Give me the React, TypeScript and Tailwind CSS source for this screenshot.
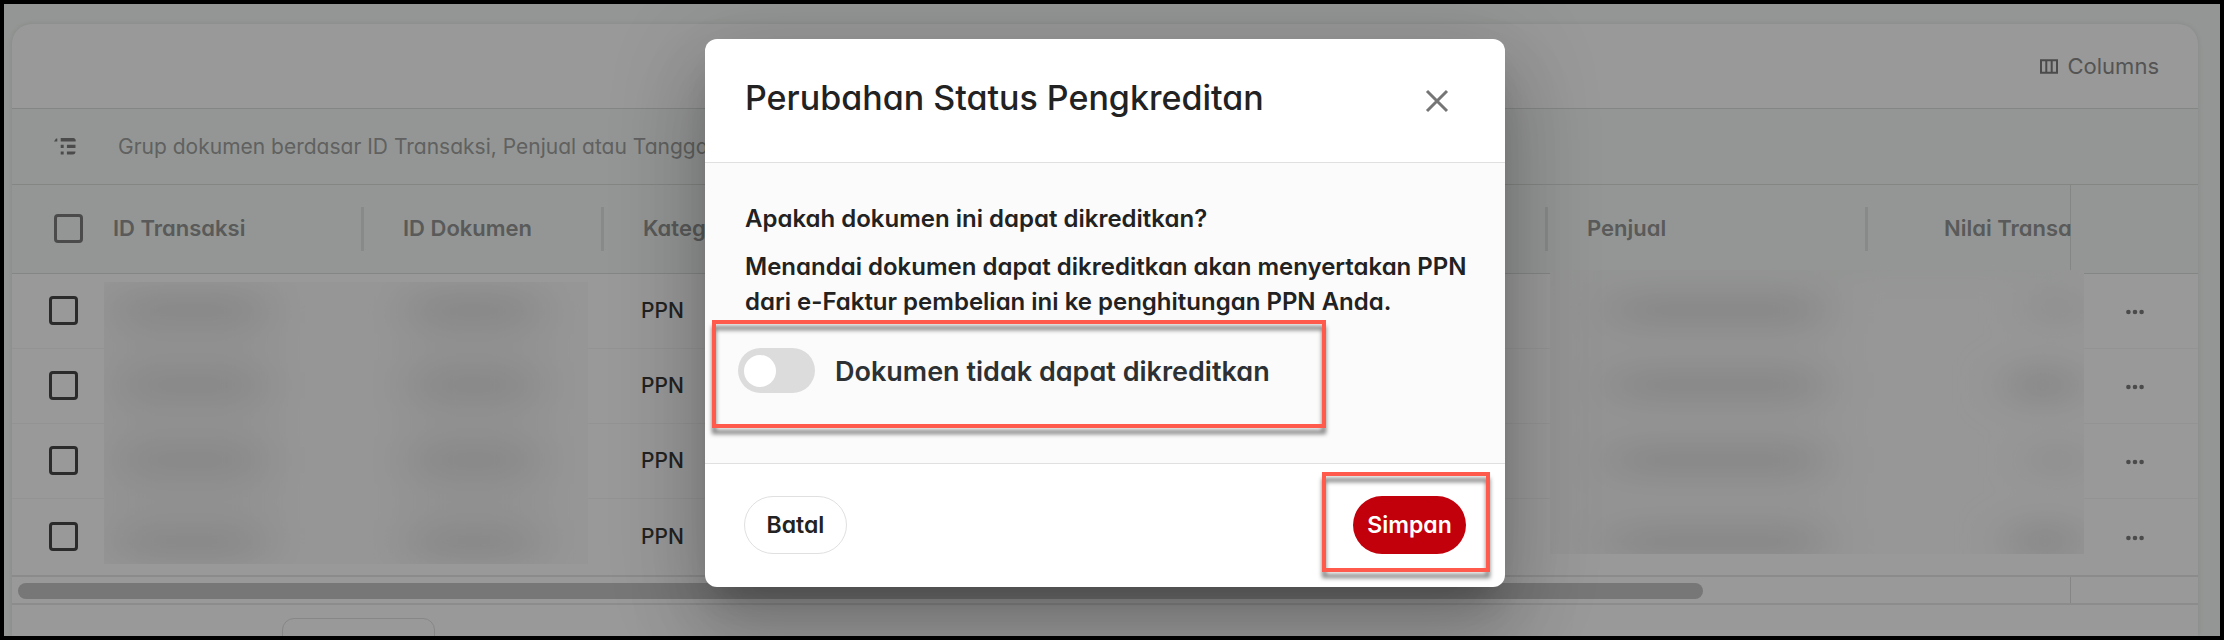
import React, { useState } from 'react';

const ROWS = [1, 2, 3, 4];

const HEAD_CELL = 'relative p-0 pl-[39px] text-left font-semibold whitespace-nowrap overflow-hidden';

function ColumnDivider() {
  return <span className="absolute right-0 top-[22px] h-[44px] w-[3px] bg-[#e3e5e4]" />;
}

function GroupIcon() {
  return (
    <svg width="22" height="17" viewBox="0 0 22 17" fill="#7d7d7d" aria-hidden="true">
      <path d="M0 3.6 2 .4h1.3v3.2H0z" />
      <path d="M6.7 0H19a2.6 2.6 0 0 1 2.6 3.4H6.7z" />
      <path d="M6.7 6.8h3V10h-3zM12.9 6.8h8.6V10h-8.6z" />
      <path d="M6.7 13.4h3v3.2h-3zM12.9 13.4h8.6a3.2 3.2 0 0 1-2.8 3.2h-5.8z" />
    </svg>
  );
}

function ColumnsIcon() {
  return (
    <svg width="18" height="15" viewBox="0 0 18 15" fill="none" stroke="#7d7d7d" strokeWidth="2" aria-hidden="true">
      <path d="M1 1.2h16v12.6H1zM6.3 1v13M11.7 1v13" />
    </svg>
  );
}

function MoreIcon() {
  return (
    <svg width="18" height="6" viewBox="0 0 18 6" fill="#7d7d7d" aria-hidden="true">
      <circle cx="2.4" cy="3" r="2.3" />
      <circle cx="9" cy="3" r="2.3" />
      <circle cx="15.6" cy="3" r="2.3" />
    </svg>
  );
}

function CheckBox({ label, dark }: { label: string; dark?: boolean }) {
  return (
    <input
      type="checkbox"
      aria-label={label}
      className={`block size-[29px] appearance-none rounded-[4px] border-3 ${
        dark ? 'border-[#484848]' : 'border-[#7d7d7d]'
      }`}
    />
  );
}

// Hidden values of the first two columns
function LeftRedaction() {
  return (
    <svg className="absolute left-[92px] top-[97px] h-[282px] w-[484px]" viewBox="0 0 484 282" aria-hidden="true">
      <defs>
        <filter id="soft-left" x="-30%" y="-60%" width="160%" height="220%">
          <feGaussianBlur stdDeviation="26 15" />
        </filter>
      </defs>
      <rect width="484" height="282" fill="#fbfbfb" />
      <g filter="url(#soft-left)" fill="#e0e0e0">
        <rect x="0" y="0" width="170" height="282" fill="#f2f2f2" />
        <rect x="300" y="0" width="140" height="282" fill="#f2f2f2" />
        {[28, 103, 178, 262].map((y) => (
          <React.Fragment key={y}>
            <rect x="20" y={y - 14} width="135" height="28" />
            <rect x="310" y={y - 14} width="120" height="28" />
          </React.Fragment>
        ))}
      </g>
    </svg>
  );
}

// Hidden values of the seller and amount columns
function RightRedaction() {
  return (
    <svg className="absolute right-[114px] top-[85px] h-[284px] w-[534px]" viewBox="0 0 534 284" aria-hidden="true">
      <defs>
        <filter id="soft-right" x="-30%" y="-60%" width="160%" height="220%">
          <feGaussianBlur stdDeviation="26 15" />
        </filter>
      </defs>
      <rect width="534" height="284" fill="#fcfcfc" />
      <g filter="url(#soft-right)" fill="#dedede">
        <rect x="10" y="-10" width="270" height="310" fill="#f5f6f5" />
        <rect x="0" y="-30" width="534" height="38" fill="#f4f7f5" />
        {[40, 115, 190, 272].map((y) => (
          <rect key={y} x="65" y={y - 14} width="205" height="28" />
        ))}
        <rect x="490" y="22" width="34" height="32" fill="#e4e4e4" />
        <rect x="464" y="96" width="58" height="38" />
        <rect x="490" y="174" width="34" height="32" fill="#e4e4e4" />
        <rect x="466" y="252" width="58" height="38" />
      </g>
    </svg>
  );
}

function DocumentTable() {
  return (
    <div className="relative">
      <table className="w-full table-fixed border-collapse text-[22px]">
        <colgroup>
          <col className="w-[72px]" />
          <col className="w-[280px]" />
          <col className="w-[240px]" />
          <col />
          <col className="w-[320px]" />
          <col className="w-[202px]" />
          <col className="w-[128px]" />
        </colgroup>
        <thead>
          <tr className="h-[88px] border-b border-[#dcdfdd] bg-[#f7fbf8] text-[#949695]">
            <th className="p-0 pl-[42px]">
              <CheckBox label="Pilih semua dokumen" />
            </th>
            <th className="relative p-0 pl-[29px] text-left font-semibold whitespace-nowrap">
              ID Transaksi
              <ColumnDivider />
            </th>
            <th className={HEAD_CELL}>
              ID Dokumen
              <ColumnDivider />
            </th>
            <th className={HEAD_CELL}>
              Kategori
              <ColumnDivider />
            </th>
            <th className={HEAD_CELL}>
              Penjual
              <ColumnDivider />
            </th>
            <th className="p-0 pl-[76px] text-left font-semibold whitespace-nowrap">Nilai Transa</th>
            <th className="border-l border-[#dcdfdd] p-0" />
          </tr>
        </thead>
        <tbody>
          {ROWS.map((row) => (
            <tr
              key={row}
              className="h-[75px] border-b border-[#f3f5f4] last:h-[78px] last:border-b-2 last:border-[#e8e8e8]"
            >
              <td className="p-0 pl-[37px]">
                <CheckBox label={`Pilih dokumen ${row}`} dark />
              </td>
              <td />
              <td />
              <td className="p-0 pl-[37px] text-[21px] font-medium text-[#3a3a3a]">PPN</td>
              <td />
              <td />
              <td className="p-0 pl-[2px]">
                <button
                  type="button"
                  aria-label={`Aksi dokumen ${row}`}
                  className="mx-auto flex size-10 items-center justify-center pt-[3px]"
                >
                  <MoreIcon />
                </button>
              </td>
            </tr>
          ))}
        </tbody>
      </table>
      <LeftRedaction />
      <RightRedaction />
    </div>
  );
}

function CreditDialog() {
  const [creditable, setCreditable] = useState(false);

  return (
    <div
      role="dialog"
      aria-modal="true"
      aria-labelledby="dialog-title"
      className="w-full max-w-[800px] rounded-xl bg-white text-[#222] shadow-[0_22px_30px_-14px_rgba(0,0,0,0.2),0_48px_76px_6px_rgba(0,0,0,0.14),0_18px_92px_16px_rgba(0,0,0,0.12)]"
    >
      <header className="flex h-[124px] items-center justify-between border-b border-[#e0e0e0] pr-11 pb-1 pl-10">
        <h2 id="dialog-title" className="pb-[2px] text-[34px] font-medium">
          Perubahan Status Pengkreditan
        </h2>
        <button type="button" aria-label="Tutup" className="flex size-12 items-center justify-center pt-1">
          <svg width="24" height="24" viewBox="0 0 24 24" stroke="#757575" strokeWidth="3" aria-hidden="true">
            <path d="M2 2l20 20M22 2l-20 20" />
          </svg>
        </button>
      </header>

      <div className="border-b border-[#e0e0e0] bg-[#fbfbfb] px-10 pt-[38px] pb-[70px] text-[24px] leading-[35px] font-semibold">
        <p>Apakah dokumen ini dapat dikreditkan?</p>
        <p className="mt-[13px] whitespace-nowrap">
          Menandai dokumen dapat dikreditkan akan menyertakan PPN
          <br />
          dari e-Faktur pembelian ini ke penghitungan PPN Anda.
        </p>
        <div className="relative mt-[29px] -ml-[7px] flex items-center gap-5">
          <input
            id="creditable"
            type="checkbox"
            role="switch"
            checked={creditable}
            onChange={(e) => setCreditable(e.target.checked)}
            className="h-[45px] w-[77px] appearance-none rounded-full bg-[#dcdcdc] px-[6px] py-[7px] before:block before:size-8 before:rounded-full before:bg-white checked:bg-[#c2000b] checked:before:translate-x-8"
          />
          <label htmlFor="creditable" className="pt-[2px] text-[27px] text-[#2e3133]">
            Dokumen tidak dapat dikreditkan
          </label>
          <span className="pointer-events-none absolute -top-7 -left-[26px] h-[108px] w-[614px] border-4 border-[#ff5a4b] drop-shadow-[0_6px_2px_rgba(0,0,0,0.5)]" />
        </div>
      </div>

      <footer className="flex items-center justify-between px-[39px] pt-8 pb-[33px] text-[23px] font-semibold">
        <button type="button" className="h-[58px] w-[103px] rounded-full border border-[#e0e0e0]">
          Batal
        </button>
        <div className="relative">
          <button type="button" className="h-[58px] w-[113px] rounded-full bg-[#c2000b] text-white">
            Simpan
          </button>
          <span className="pointer-events-none absolute -top-6 -right-6 h-[100px] w-[168px] border-4 border-[#ff5a4b] drop-shadow-[0_6px_2px_rgba(0,0,0,0.5)]" />
        </div>
      </footer>
    </div>
  );
}

export default function App() {
  return (
    <div className="relative flex h-screen flex-col overflow-hidden border-4 border-black bg-[#f7fbf8] pt-5 pr-[22px] pl-2 font-[Inter,'Noto_Sans',sans-serif] [font-feature-settings:'cv11']">
      <main className="min-h-0 flex-1 overflow-hidden rounded-t-[20px] bg-white shadow-[0_0_6px_rgba(0,0,0,0.1)]">
        <div className="flex h-[85px] items-center justify-end border-b border-[#dcdfdd] pr-[39px]">
          <button type="button" className="flex items-center gap-[10px] text-[22px] text-[#8c8c8c]">
            <ColumnsIcon />
            Columns
          </button>
        </div>
        <div className="flex h-[76px] items-center gap-[42px] border-b border-[#dcdfdd] bg-[#f7fbf8] pl-[42px] text-[21px] whitespace-nowrap text-[#a0a2a1]">
          <GroupIcon />
          <span>Grup dokumen berdasar ID Transaksi, Penjual atau Tanggal</span>
        </div>
        <DocumentTable />
        <div className="flex h-[28px] border-b-2 border-[#eaeaea]">
          <div className="flex-1 px-[6px] pt-[6px]">
            <div className="mr-[361px] h-4 rounded-full bg-[#c6c6c6]" />
          </div>
          <div className="w-[128px] border-l border-[#dcdfdd]" />
        </div>
        <div className="pt-[13px] pl-[270px]">
          <select aria-label="Baris per halaman" className="h-14 w-[153px] appearance-none rounded-xl border border-[#dfe1e0]" />
        </div>
      </main>

      <div className="absolute inset-0 flex items-center justify-center bg-black/40 pr-[14px] pb-[14px]">
        <CreditDialog />
      </div>
    </div>
  );
}
